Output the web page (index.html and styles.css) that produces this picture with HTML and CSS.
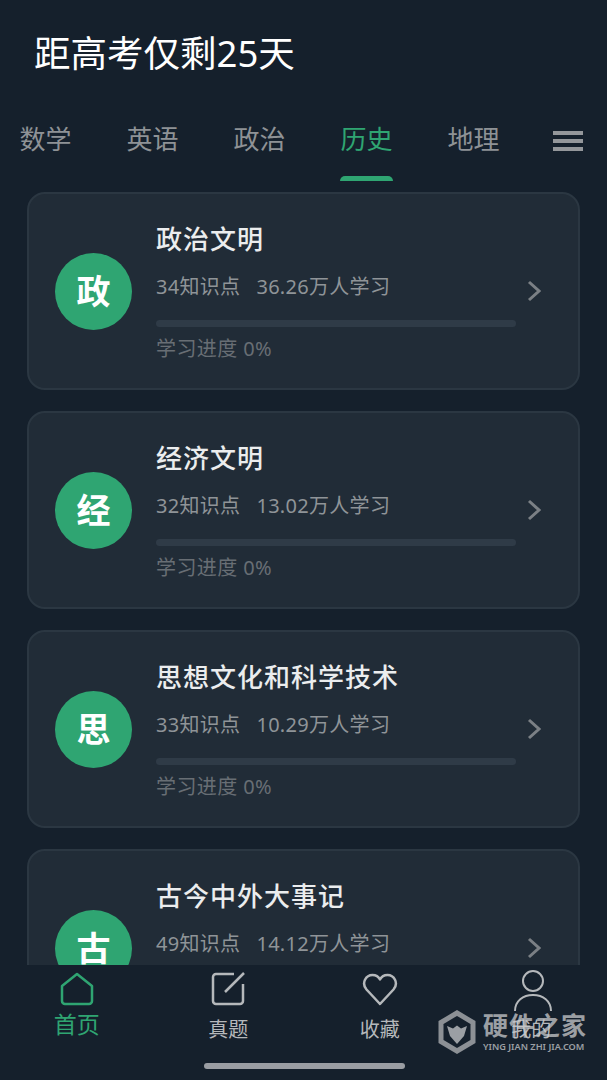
FILE: index.html
```html
<!DOCTYPE html>
<html lang="zh-CN">
<head>
    <meta charset="UTF-8">
    <meta name="viewport" content="width=device-width, initial-scale=1.0">
    <title>距高考仅剩25天</title>
    <link rel="stylesheet" href="styles.css">
</head>
<body>

    <div class="app">
        <h1 class="countdown">距高考仅剩25天</h1>

        <nav class="subject-tabs">
            <span class="subject-tab">数学</span>
            <span class="subject-tab">英语</span>
            <span class="subject-tab">政治</span>
            <span class="subject-tab active">历史</span>
            <span class="subject-tab">地理</span>
            <span class="menu-icon"><i></i><i></i><i></i></span>
        </nav>

        <div class="card-list">
            <div class="card">
                <div class="card-badge">政</div>
                <div class="card-body">
                    <h2 class="card-title">政治文明</h2>
                    <p class="card-meta"><span>34知识点</span><span>36.26万人学习</span></p>
                    <div class="progress-track"></div>
                    <p class="progress-text">学习进度 0%</p>
                </div>
                <svg class="chevron" width="14" height="22" viewBox="0 0 14 22"><path d="M2 2l10 9-10 9"/></svg>
            </div>
            <div class="card">
                <div class="card-badge">经</div>
                <div class="card-body">
                    <h2 class="card-title">经济文明</h2>
                    <p class="card-meta"><span>32知识点</span><span>13.02万人学习</span></p>
                    <div class="progress-track"></div>
                    <p class="progress-text">学习进度 0%</p>
                </div>
                <svg class="chevron" width="14" height="22" viewBox="0 0 14 22"><path d="M2 2l10 9-10 9"/></svg>
            </div>
            <div class="card">
                <div class="card-badge">思</div>
                <div class="card-body">
                    <h2 class="card-title">思想文化和科学技术</h2>
                    <p class="card-meta"><span>33知识点</span><span>10.29万人学习</span></p>
                    <div class="progress-track"></div>
                    <p class="progress-text">学习进度 0%</p>
                </div>
                <svg class="chevron" width="14" height="22" viewBox="0 0 14 22"><path d="M2 2l10 9-10 9"/></svg>
            </div>
            <div class="card">
                <div class="card-badge">古</div>
                <div class="card-body">
                    <h2 class="card-title">古今中外大事记</h2>
                    <p class="card-meta"><span>49知识点</span><span>14.12万人学习</span></p>
                    <div class="progress-track"></div>
                    <p class="progress-text">学习进度 0%</p>
                </div>
                <svg class="chevron" width="14" height="22" viewBox="0 0 14 22"><path d="M2 2l10 9-10 9"/></svg>
            </div>
        </div>

        <footer class="tab-bar">
            <div class="tab-item active">
                <svg width="36" height="36" viewBox="0 0 36 36"><path d="M18 3L33 15V30a3 3 0 0 1-3 3H6a3 3 0 0 1-3-3V15z"/></svg>
                <span class="tab-home">首页</span>
            </div>
            <div class="tab-item">
                <svg width="36" height="36" viewBox="0 0 36 36"><path d="M24 3H6a3 3 0 0 0-3 3v24a3 3 0 0 0 3 3h24a3 3 0 0 0 3-3V13"/><path d="M34 2L15 21"/></svg>
                <span>真题</span>
            </div>
            <div class="tab-item">
                <svg width="36" height="36" viewBox="0 0 36 36"><path d="M18 33L4.500 18.500C-1 12 4 4 10.500 4C13.500 4 16.500 5.500 18 8.500C19.500 5.500 22.500 4 25.500 4C32 4 37 12 31.500 18.500z"/></svg>
                <span>收藏</span>
            </div>
            <div class="tab-item">
                <svg class="user-icon" width="38" height="42" viewBox="0 0 38 42"><circle cx="19" cy="11" r="10"/><path d="M1 41C1 31 9 25 19 25S37 31 37 41"/></svg>
                <span>我的</span>
            </div>
        </footer>

        <div class="home-indicator"></div>

        <!-- watermark sits over the tab bar -->
        <div class="watermark">
            <svg width="38" height="44" viewBox="0 0 38 44">
                <path class="wm-hex" d="M19 3L35 12.500V31.500L19 41L3 31.500V12.500z"/>
                <path class="wm-fox" d="M9 16L15 18.500L19 15.500L23 18.500L29 16L26 26L19 34L12 26z"/>
            </svg>
            <div class="wm-text">
                <div class="wm-name">硬件之家</div>
                <div class="wm-url">YING JIAN ZHI JIA.COM</div>
            </div>
        </div>
    </div>

</body>
</html>
```

FILE: styles.css
```css
/* Reset and Body Styling */
* {
    margin: 0;
    padding: 0;
    box-sizing: border-box;
}
body {
    font-family: "Noto Sans", "Noto Sans CJK SC", sans-serif;
    background-color: #15202c;
    color: #ffffff;
}

.app {
    position: relative;
    display: flex;
    flex-direction: column;
    width: 607px;
    height: 1080px;
    overflow: hidden;
    background-color: #15202c;
}

/* Header */
.countdown {
    padding: 25px 0 0 34px;
    height: 108px;
    font-size: 36.500px;
    line-height: 56px;
    font-weight: 400;
    color: #ffffff;
}

/* Subject Tabs */
.subject-tabs {
    display: flex;
    flex-shrink: 0;
    gap: 55px;
    height: 84px;
    padding-left: 19px;
}
.subject-tab {
    position: relative;
    width: 53px;
    height: 64px;
    margin-right: -1px;
    font-size: 26px;
    line-height: 63px;
    text-align: center;
    color: #8e9296;
}
.subject-tab.active {
    color: #2fa572;
}
.subject-tab.active::after {
    content: "";
    position: absolute;
    left: 0;
    right: 0;
    bottom: -9px;
    height: 5px;
    border-radius: 5px 5px 0 0;
    background-color: #2fa572;
}
.menu-icon {
    display: flex;
    flex-direction: column;
    gap: 4px;
    width: 30px;
    margin: 23px 0 0 -1px;
}
.menu-icon i {
    display: block;
    height: 4px;
    background-color: #94979b;
}

/* Cards */
.card-list {
    flex: 1;
    min-height: 0;
    overflow: hidden;
    display: flex;
    flex-direction: column;
    gap: 21px;
    padding: 0 27px;
}
.card {
    display: flex;
    flex-shrink: 0;
    align-items: center;
    height: 198px;
    padding: 0 38px 0 26px;
    background-color: #212c37;
    border: 2px solid #2b3742;
    border-radius: 18px;
}
.card-badge {
    flex-shrink: 0;
    width: 77px;
    height: 77px;
    margin-right: 24px;
    border-radius: 50%;
    background-color: #2fa572;
    font-size: 34px;
    font-weight: 700;
    line-height: 77px;
    text-align: center;
}
.card-body {
    flex: 1;
    padding-top: 2px;
}
.card-title {
    font-size: 26px;
    font-weight: 500;
    line-height: 38px;
    letter-spacing: 1px;
    color: #ebedee;
}
.card-meta {
    display: flex;
    gap: 16px;
    margin-top: 14px;
    font-size: 20px;
    line-height: 30px;
    letter-spacing: 0.3px;
    color: #8f9498;
}
.progress-track {
    width: 360px;
    height: 7px;
    margin-top: 18px;
    border-radius: 4px;
    background-color: #2f3b47;
}
.progress-text {
    margin-top: 7px;
    font-size: 20px;
    line-height: 30px;
    letter-spacing: 0.4px;
    color: #686e74;
}
.chevron {
    flex-shrink: 0;
    margin-left: 11px;
    fill: none;
    stroke: #7b8085;
    stroke-width: 3;
}

/* Bottom Tab Bar */
.tab-bar {
    display: grid;
    flex-shrink: 0;
    grid-template-columns: repeat(4, 1fr);
    height: 115px;
    padding-left: 1px;
    background-color: #15202c;
}
.tab-item {
    display: flex;
    flex-direction: column;
    align-items: center;
    padding-top: 6px;
    font-size: 20px;
    line-height: 30px;
    color: #b5b8bb;
}
.tab-item svg {
    flex-shrink: 0;
    margin-bottom: 8px;
    fill: none;
    stroke: #b5b8bb;
    stroke-width: 2.5;
    stroke-linejoin: round;
}
.tab-item .user-icon {
    margin: -1px 0 3px 3px;
    stroke-width: 2;
}
.tab-item.active {
    color: #2fa572;
}
.tab-item.active svg {
    stroke: #2fa572;
}
.tab-home {
    margin-top: -6px;
    font-size: 23px;
}

.home-indicator {
    position: absolute;
    left: 204px;
    bottom: 11px;
    width: 201px;
    height: 6px;
    border-radius: 3px;
    background-color: #9a9da3;
}

/* Watermark */
.watermark {
    position: absolute;
    left: 438px;
    top: 1010px;
    display: flex;
    gap: 7px;
    opacity: 0.75;
    color: #c8cacc;
}
.wm-hex {
    fill: none;
    stroke: #b4b6b9;
    stroke-width: 5;
}
.wm-fox {
    fill: #c8cacc;
}
.wm-name {
    font-size: 25px;
    font-weight: 700;
    line-height: 30px;
    letter-spacing: 1px;
}
.wm-url {
    font-size: 9.200px;
    font-weight: 600;
    line-height: 14px;
}
```
